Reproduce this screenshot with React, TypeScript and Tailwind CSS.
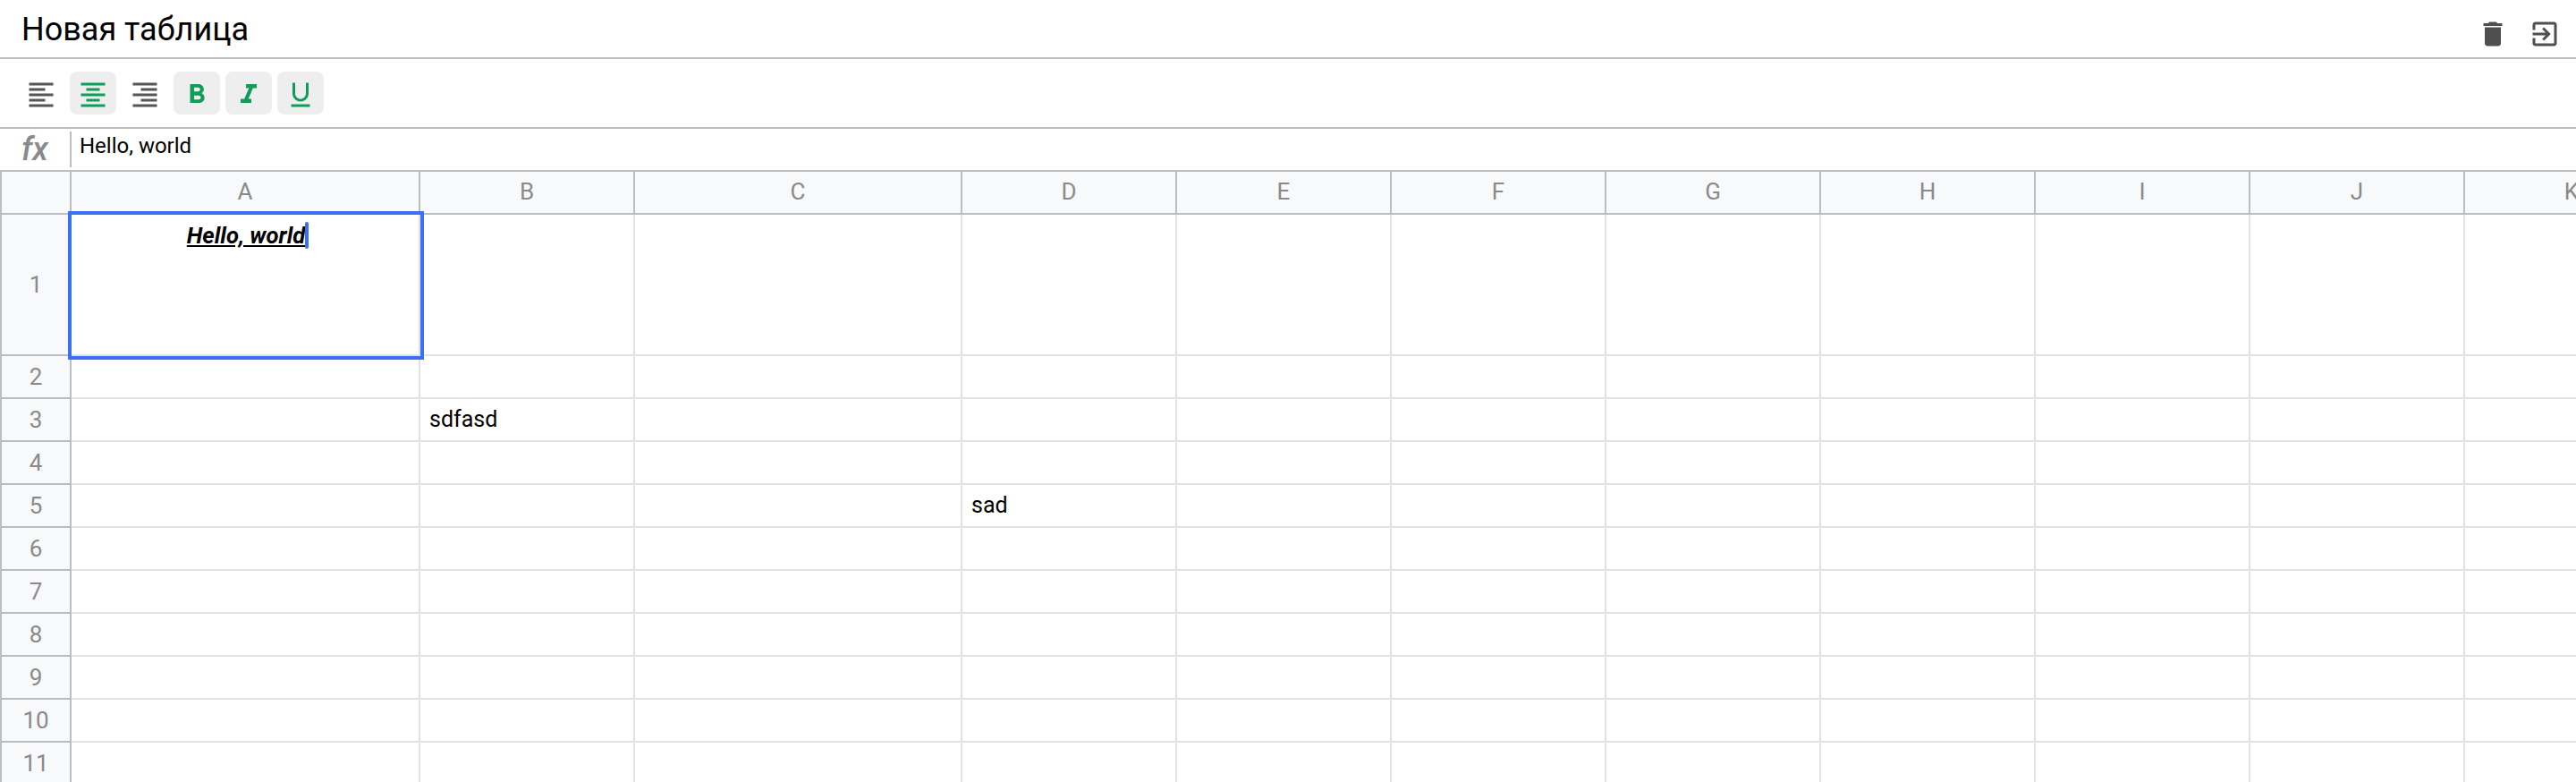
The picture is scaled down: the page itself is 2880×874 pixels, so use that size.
const COLUMNS = [
  { name: 'A', width: 'w-[390px]' },
  { name: 'B', width: 'w-[240px]' },
  { name: 'C', width: 'w-[366px]' },
  { name: 'D', width: 'w-[240px]' },
  { name: 'E', width: 'w-[240px]' },
  { name: 'F', width: 'w-[240px]' },
  { name: 'G', width: 'w-[240px]' },
  { name: 'H', width: 'w-[240px]' },
  { name: 'I', width: 'w-[240px]' },
  { name: 'J', width: 'w-[240px]' },
  { name: 'K', width: 'w-[240px]' },
];
const ROWS = [1, 2, 3, 4, 5, 6, 7, 8, 9, 10, 11];
const CELLS: Record<string, string> = { B3: 'sdfasd', D5: 'sad' };

function Icon({ d, className }: { d: string; className: string }) {
  return (
    <svg viewBox="0 0 24 24" fill="currentColor" className={`h-9 w-9 ${className}`}>
      <path d={d} />
    </svg>
  );
}

const ICONS = {
  left: 'M15 15H3v2h12v-2zm0-8H3v2h12V7zM3 13h18v-2H3v2zm0 8h18v-2H3v2zM3 3v2h18V3H3z',
  center: 'M7 15v2h10v-2H7zm-4 6h18v-2H3v2zm0-8h18v-2H3v2zm4-6v2h10V7H7zM3 3v2h18V3H3z',
  right: 'M3 21h18v-2H3v2zm6-4h12v-2H9v2zm-6-4h18v-2H3v2zm6-4h12V7H9v2zM3 3v2h18V3H3z',
  bold: 'M15.6 10.79c.97-.67 1.65-1.77 1.65-2.79 0-2.26-1.75-4-4-4H7v14h7.04c2.09 0 3.71-1.7 3.71-3.79 0-1.52-.86-2.82-2.15-3.42zM10 6.5h3c.83 0 1.5.67 1.5 1.5s-.67 1.5-1.5 1.5h-3v-3zm3.5 9H10v-3h3.5c.83 0 1.5.67 1.5 1.5s-.67 1.5-1.5 1.5z',
  italic: 'M10 4v3h2.21l-3.42 8H6v3h8v-3h-2.21l3.42-8H18V4z',
  underline: 'M12 17c3.31 0 6-2.69 6-6V3h-2v8c0 2.21-1.79 4-4 4s-4-1.79-4-4V3H6v8c0 3.31 2.69 6 6 6zm-7 2v2h14v-2H5z',
  trash: 'M6 19c0 1.1.9 2 2 2h8c1.1 0 2-.9 2-2V7H6v12zM19 4h-3.5l-1-1h-5l-1 1H5v2h14V4z',
  exit: 'M10.09 15.59L11.5 17l5-5-5-5-1.41 1.41L12.67 11H3v2h9.67l-2.58 2.59zM19 3H5c-1.11 0-2 .9-2 2v4h2V5h14v14H5v-4H3v4c0 1.1.89 2 2 2h14c1.1 0 2-.9 2-2V5c0-1.1-.9-2-2-2z',
};

const TOOLS = [
  { d: ICONS.left, active: false },
  { d: ICONS.center, active: true },
  { d: ICONS.right, active: false },
  { d: ICONS.bold, active: true },
  { d: ICONS.italic, active: true },
  { d: ICONS.underline, active: true },
];

export default function App() {
  return (
    <div className="h-[874px] w-full overflow-hidden bg-white font-['Roboto',sans-serif] text-black antialiased">
      {/* Title */}
      <div className="flex h-[66px] items-start justify-between border-b-2 border-[#bdbdbd] pl-6 pr-[17px]">
        <h1 className="text-[36px] leading-[66px]">Новая таблица</h1>
        <div className="flex gap-[22px] pt-5 text-[#4f4f4f]">
          <Icon d={ICONS.trash} className="" />
          <Icon d={ICONS.exit} className="" />
        </div>
      </div>

      {/* Toolbar */}
      <div className="flex h-[78px] items-start gap-1.5 border-b-2 border-[#bdbdbd] pl-5 pt-3.5">
        {TOOLS.map((t, i) => (
          <button
            key={i}
            className={`flex h-12 w-[52px] items-center justify-center rounded-lg pt-[3px] ${
              t.active ? 'bg-[#eeeeee] text-[#0f9d58]' : 'text-[#555555]'
            }`}
          >
            <Icon d={t.d} className="shrink-0" />
          </button>
        ))}
      </div>

      {/* Formula bar */}
      <div className="flex h-12 items-stretch border-b-2 border-[#bdbdbd]">
        <div className="w-[78px] pl-6 text-[36px] font-medium italic leading-[46px] text-[#8a8a8a]">fx</div>
        <div className="my-[3px] w-0.5 bg-[#bdbdbd]" />
        <div className="pl-[9px] text-2xl leading-[38px]">Hello, world</div>
      </div>

      {/* Sheet */}
      <div className="flex h-12 w-max">
        <div className="h-12 w-20 border-x-2 border-b-2 border-[#bdbdbd] bg-[#f8f9fa]" />
        {COLUMNS.map(c => (
          <div
            key={c.name}
            className={`${c.width} h-12 border-r-2 border-b-2 border-[#bdbdbd] bg-[#f8f9fa] text-center text-[26px] leading-[44px] text-[#8a8a8a]`}
          >
            {c.name}
          </div>
        ))}
      </div>
      {ROWS.map(r => (
        <div key={r} className={`flex w-max ${r === 1 ? 'h-[158px]' : 'h-12'}`}>
          <div className="flex w-20 items-center justify-center border-x-2 border-b-2 border-[#bdbdbd] bg-[#f8f9fa] text-[26px] text-[#8a8a8a]">
            {r}
          </div>
          {COLUMNS.map(c => (
            <div
              key={c.name}
              className={`${c.width} relative border-r-2 border-b-2 border-[#e2e2e2] pl-[10px] text-[25px] leading-[46px]`}
            >
              {CELLS[c.name + r]}
              {c.name === 'A' && r === 1 && (
                <div className="absolute -bottom-1.5 -left-1 -right-1.5 -top-1 z-10 border-4 border-[#3d6ff5] text-center text-[25.6px]">
                  <span className="relative font-bold italic underline">
                    Hello, world
                    <span className="absolute -right-1 top-0 h-[30px] w-1 rounded-sm bg-[#3d6ff5]" />
                  </span>
                </div>
              )}
            </div>
          ))}
        </div>
      ))}
    </div>
  );
}
